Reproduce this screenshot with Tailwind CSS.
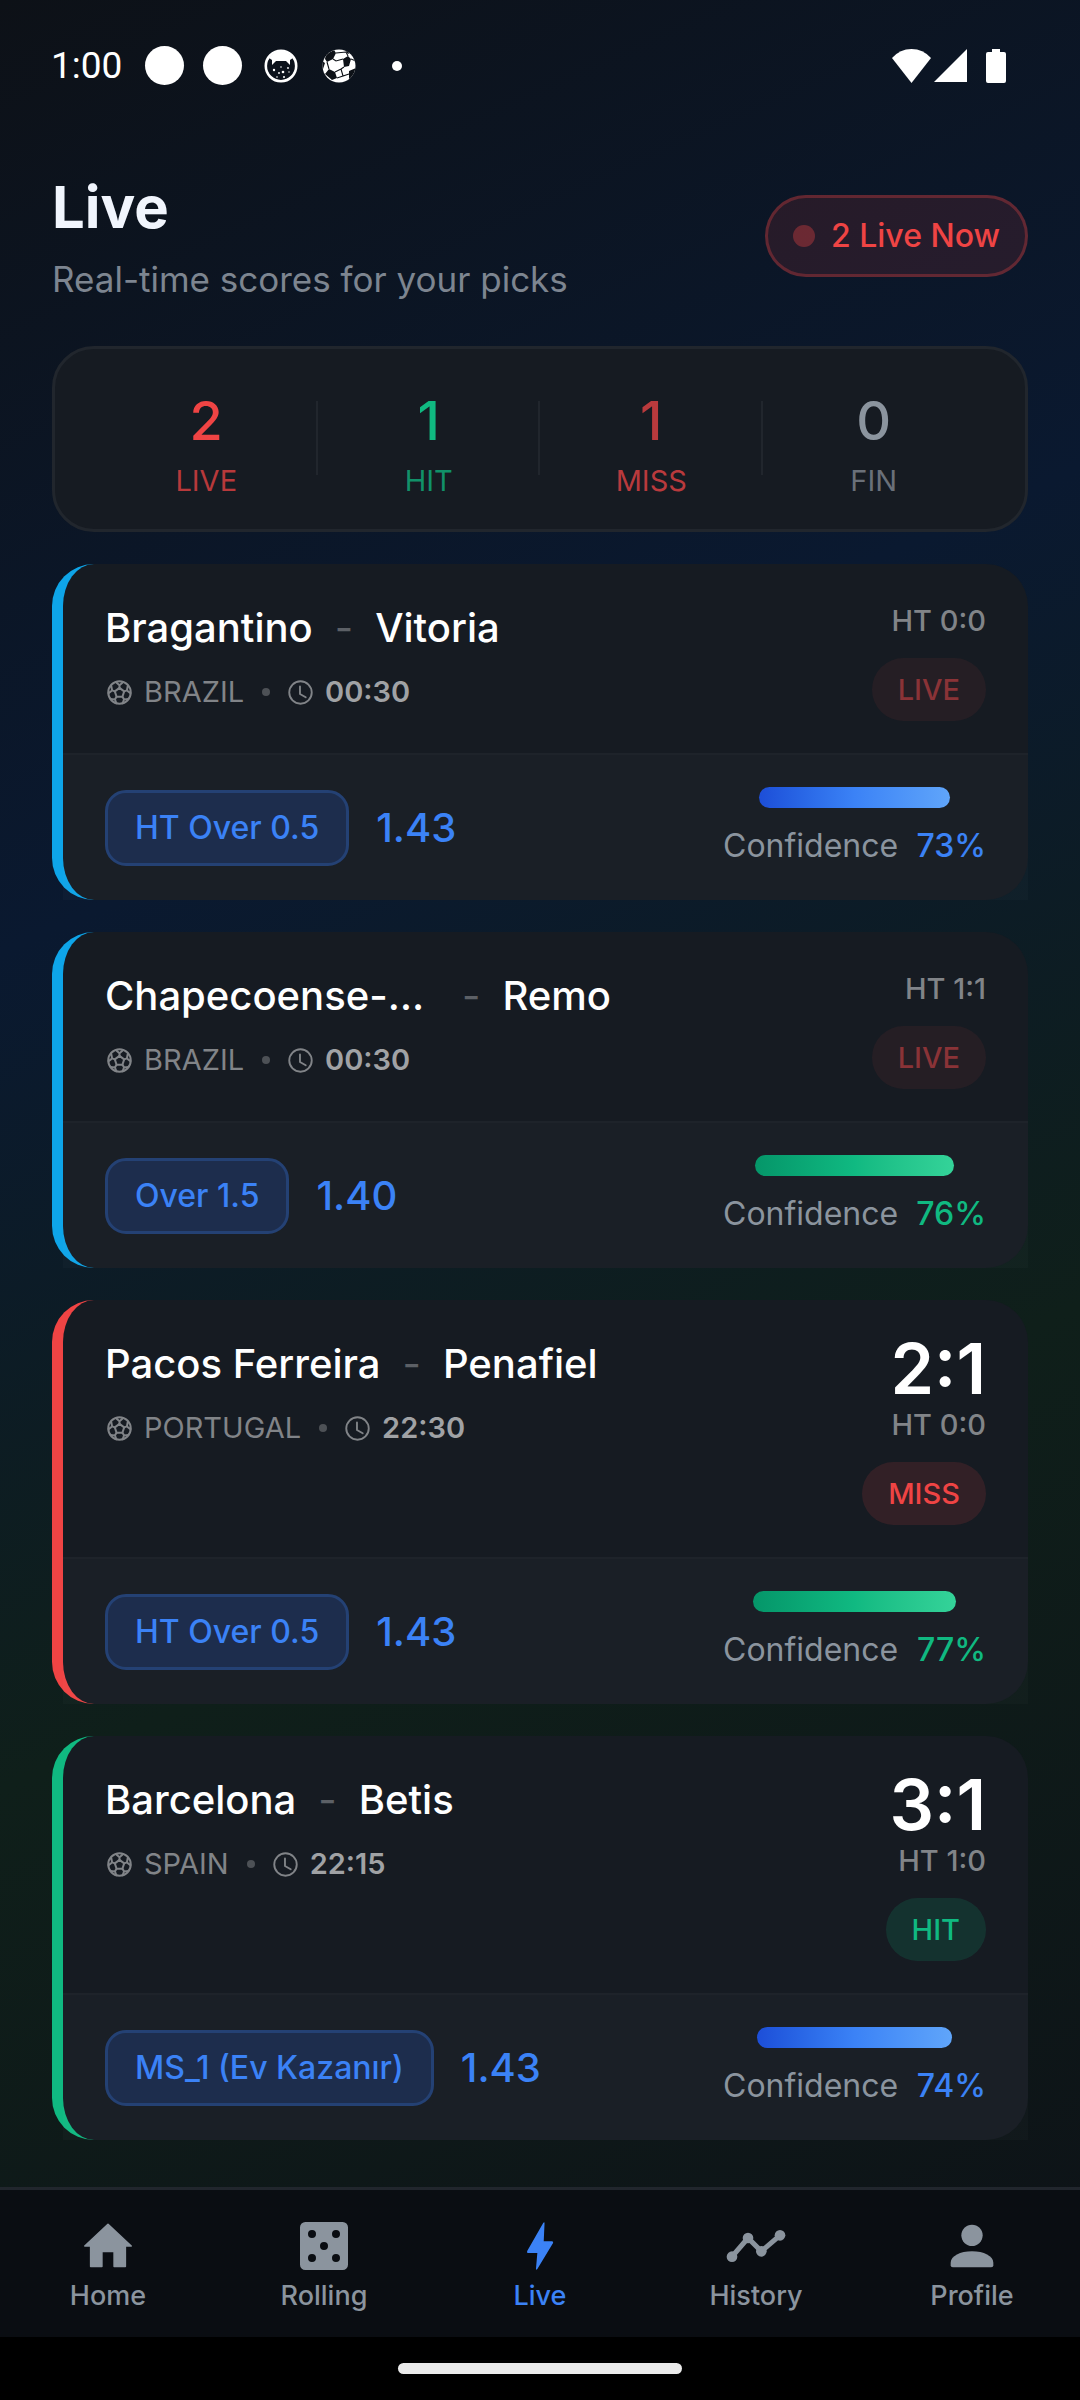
<!DOCTYPE html>
<html lang="en">
<head>
<meta charset="utf-8">
<meta name="viewport" content="width=device-width, initial-scale=1">
<title>Live</title>
<script src="https://cdn.jsdelivr.net/npm/@tailwindcss/browser@4"></script>
</head>
<body class="bg-black font-['Inter',sans-serif] text-white antialiased">
<svg class="hidden" aria-hidden="true">
  <symbol id="ball" viewBox="0 0 24 24">
    <g fill="none" stroke="currentColor" stroke-width="1.9" stroke-linejoin="round" stroke-linecap="round">
      <circle cx="12" cy="12" r="10.8"/>
      <path d="M12 7.6L7.5 10.9L9.2 16.1H14.8L16.5 10.9Z"/>
      <path d="M12 7.6V5L8.4 2M12 5L15.6 2M7.5 10.9L4.9 10L4 5.3M4.9 10L1.5 12.6M16.5 10.9L19.1 10L20 5.3M19.1 10L22.5 12.6M9.2 16.1L7.6 18.6L3.4 18.2M7.6 18.6L9 22.3M14.8 16.1L16.4 18.6L20.6 18.2M16.4 18.6L15 22.3"/>
    </g>
  </symbol>
  <symbol id="clock" viewBox="0 0 24 24">
    <g fill="none" stroke="currentColor" stroke-width="1.8" stroke-linejoin="round" stroke-linecap="round">
      <circle cx="12" cy="12" r="10.8"/>
      <path d="M11.5 6.2V13.4L17 16.6"/>
    </g>
  </symbol>
</svg>

<div class="flex min-h-screen flex-col bg-[linear-gradient(155.8deg,#0d1117_0%,#0a1930_33%,#0f1f1a_62%,#0d1117_100%)]">

  <!-- Status bar -->
  <div class="flex h-[131px] items-center justify-between pr-[74px] pl-[51px]">
    <div class="flex items-center">
      <span class="font-['Roboto',sans-serif] text-[37px] leading-10">1:00</span>
      <span class="ml-[23px] size-[39px] rounded-full bg-white"></span>
      <span class="ml-[19px] size-[39px] rounded-full bg-white"></span>
      <svg class="ml-[22px] size-[34px]" viewBox="0 0 34 34" aria-hidden="true">
        <circle cx="17" cy="17" r="15.2" fill="none" stroke="#fff" stroke-width="2.6"/>
        <path d="M5 9Q10 2 17 2T29 9L26 11V16L22 12H12L8 16V11Z" fill="#fff"/>
        <g fill="#fff"><circle cx="10" cy="21" r="1.2"/><circle cx="15" cy="24" r=".9"/><circle cx="19" cy="23" r="1.3"/><circle cx="24" cy="19" r=".9"/><circle cx="17" cy="18" r=".8"/><circle cx="20" cy="28" r="1"/><circle cx="13" cy="28" r=".8"/><circle cx="25" cy="23" r=".7"/></g>
      </svg>
      <svg class="ml-6 size-[34px]" viewBox="0 0 34 34" aria-hidden="true">
        <defs><clipPath id="disc"><circle cx="17" cy="17" r="16.5"/></clipPath></defs>
        <g clip-path="url(#disc)">
          <rect width="34" height="34" fill="#fff"/>
          <path d="M4 5L12 1L14 4L11 10L5 13L3 10ZM21 10L26 7L29 10L27 17L22 18ZM7 20L13 23L15 29L10 31L3 25ZM27 22L34 19V28L27 30ZM0 12L3 14L1 20L0 20ZM22 0L29 3L26 5Z" fill="#0d1117"/>
          <path d="M11 10L14 12L21 10M14 4L24 3L26 7M7 20L5 13M13 23L19 20L22 18M19 20L21 27L27 25M21 27L15 29M29 10L34 12" fill="none" stroke="#0d1117" stroke-width="1.1"/>
        </g>
      </svg>
      <span class="ml-9 size-[10px] rounded-full bg-white"></span>
    </div>
    <div class="flex items-center">
      <svg class="h-[34px] w-[39px]" viewBox="0 0 39 34" fill="#fff" aria-hidden="true"><path d="M0 9Q8 0 19.500 0T39 9L19.500 34Z"/></svg>
      <svg class="ml-[3px] size-[33px]" viewBox="0 0 33 33" fill="#fff" aria-hidden="true"><path d="M33 0V33H0Z"/></svg>
      <svg class="ml-[19px] h-[34px] w-5" viewBox="0 0 20 34" fill="#fff" aria-hidden="true"><path d="M6 0H14V3H18Q20 3 20 5V32Q20 34 18 34H2Q0 34 0 32V5Q0 3 2 3H6Z"/></svg>
    </div>
  </div>

  <main class="flex grow flex-col px-[52px] pb-[47px]">
    <!-- Page title -->
    <header class="flex items-center justify-between pt-[41px] pb-[46px]">
      <div>
        <h1 class="text-[58px] leading-[70px] font-bold text-[#f1f5fd]">Live</h1>
        <p class="mt-4 text-[35px] leading-[42px] text-[#7d8590]">Real-time scores for your picks</p>
      </div>
      <div class="flex h-[82px] items-center gap-4 rounded-full border-[3px] border-[#ef4444]/30 bg-[#ef4444]/12 px-[25px]">
        <span class="size-[22px] rounded-full bg-[#ef4444]/35"></span>
        <span class="text-[32px] leading-[42px] font-medium text-[#ef4444]">2 Live Now</span>
      </div>
    </header>

    <!-- Totals -->
    <dl class="grid grid-cols-4 rounded-[42px] border-[3px] border-[#21262d] bg-[#161b22] px-10 pt-[38px] pb-[30px] text-center">
      <div class="relative flex flex-col-reverse">
        <dt class="text-[29px] leading-9 text-[#ef4444]/75">LIVE</dt>
        <dd class="mb-2 text-[54px] leading-[68px] font-medium text-[#ef4444]">2</dd>
        <span class="absolute top-[14px] right-0 h-[74px] w-[2px] bg-[#21262d]"></span>
      </div>
      <div class="relative flex flex-col-reverse">
        <dt class="text-[29px] leading-9 text-[#10b981]/75">HIT</dt>
        <dd class="mb-2 text-[54px] leading-[68px] font-medium text-[#10b981]">1</dd>
        <span class="absolute top-[14px] right-0 h-[74px] w-[2px] bg-[#21262d]"></span>
      </div>
      <div class="relative flex flex-col-reverse">
        <dt class="text-[29px] leading-9 text-[#b93a3d]">MISS</dt>
        <dd class="mb-2 text-[54px] leading-[68px] font-medium text-[#b93a3d]">1</dd>
        <span class="absolute top-[14px] right-0 h-[74px] w-[2px] bg-[#21262d]"></span>
      </div>
      <div class="flex flex-col-reverse">
        <dt class="text-[29px] leading-9 text-[#6a7079]">FIN</dt>
        <dd class="mb-2 text-[54px] leading-[68px] font-medium text-[#8b949e]">0</dd>
      </div>
    </dl>

    <!-- Matches -->
    <div class="mt-8 flex flex-col gap-8">
      <article class="rounded-[42px] border-l-[11px] border-[#0ea5e9] bg-[#161b22]">
        <div class="flex min-h-[189px] justify-between px-[42px] py-8">
          <div class="pt-[6px]">
            <h2 class="flex text-[40px] leading-[52px] font-medium"><span>Bragantino</span><span class="mx-[22px] font-normal text-[#5c6066]">-</span><span>Vitoria</span></h2>
            <p class="mt-5 flex items-center text-[29px] leading-9 text-[#818488]"><svg class="ml-[2px] size-[25px]"><use href="#ball"/></svg><span class="ml-3">BRAZIL</span><span class="mx-[18px] size-2 rounded-full bg-[#4d5156]"></span><svg class="size-[25px]"><use href="#clock"/></svg><time class="ml-3 font-semibold text-[#a0a2a5]">00:30</time></p>
          </div>
          <div class="flex flex-col items-end justify-end">
            <p class="text-[29px] leading-[38px] font-medium text-[#818488]">HT 0:0</p>
            <span class="mt-[18px] flex h-[63px] items-center rounded-full bg-[#ef4444]/7 px-[26px] text-[29px] leading-9 font-medium text-[#8a3337]">LIVE</span>
          </div>
        </div>
        <div class="flex items-center justify-between border-t-2 border-white/2 bg-white/2 px-[42px] py-8">
          <div class="flex items-center gap-[27px]">
            <span class="flex h-[76px] items-center rounded-[21px] border-[3px] border-[#244174] bg-[#1d2d4d] px-[27px] text-[32px] leading-[42px] font-medium text-[#3b82f6]">HT Over 0.5</span>
            <span class="text-[40px] leading-[52px] font-medium text-[#3b82f6]">1.43</span>
          </div>
          <div class="flex w-[263px] flex-col items-center gap-4">
            <div class="h-[21px] rounded-full bg-linear-to-r from-[#1d4ed8] via-[#3b82f6] to-[#60a5fa]" style="width:73%"></div>
            <p class="flex w-full justify-between text-[32px] leading-11 text-[#8b949e]"><span>Confidence</span><span class="font-medium text-[#3b82f6]">73%</span></p>
          </div>
        </div>
      </article>

      <article class="rounded-[42px] border-l-[11px] border-[#0ea5e9] bg-[#161b22]">
        <div class="flex min-h-[189px] justify-between px-[42px] py-8">
          <div class="pt-[6px]">
            <h2 class="flex text-[40px] leading-[52px] font-medium"><span class="w-[335px]">Chapecoense-…</span><span class="mx-[22px] font-normal text-[#5c6066]">-</span><span>Remo</span></h2>
            <p class="mt-5 flex items-center text-[29px] leading-9 text-[#818488]"><svg class="ml-[2px] size-[25px]"><use href="#ball"/></svg><span class="ml-3">BRAZIL</span><span class="mx-[18px] size-2 rounded-full bg-[#4d5156]"></span><svg class="size-[25px]"><use href="#clock"/></svg><time class="ml-3 font-semibold text-[#a0a2a5]">00:30</time></p>
          </div>
          <div class="flex flex-col items-end justify-end">
            <p class="text-[29px] leading-[38px] font-medium text-[#818488]">HT 1:1</p>
            <span class="mt-[18px] flex h-[63px] items-center rounded-full bg-[#ef4444]/7 px-[26px] text-[29px] leading-9 font-medium text-[#8a3337]">LIVE</span>
          </div>
        </div>
        <div class="flex items-center justify-between border-t-2 border-white/2 bg-white/2 px-[42px] py-8">
          <div class="flex items-center gap-[27px]">
            <span class="flex h-[76px] items-center rounded-[21px] border-[3px] border-[#244174] bg-[#1d2d4d] px-[27px] text-[32px] leading-[42px] font-medium text-[#3b82f6]">Over 1.5</span>
            <span class="text-[40px] leading-[52px] font-medium text-[#3b82f6]">1.40</span>
          </div>
          <div class="flex w-[263px] flex-col items-center gap-4">
            <div class="h-[21px] rounded-full bg-linear-to-r from-[#059669] via-[#10b981] to-[#34d399]" style="width:76%"></div>
            <p class="flex w-full justify-between text-[32px] leading-11 text-[#8b949e]"><span>Confidence</span><span class="font-medium text-[#10b981]">76%</span></p>
          </div>
        </div>
      </article>

      <article class="rounded-[42px] border-l-[11px] border-[#ef4444] bg-[#161b22]">
        <div class="flex min-h-[189px] justify-between px-[42px] py-8">
          <div class="pt-[6px]">
            <h2 class="flex text-[40px] leading-[52px] font-medium"><span>Pacos Ferreira</span><span class="mx-[22px] font-normal text-[#5c6066]">-</span><span>Penafiel</span></h2>
            <p class="mt-5 flex items-center text-[29px] leading-9 text-[#818488]"><svg class="ml-[2px] size-[25px]"><use href="#ball"/></svg><span class="ml-3">PORTUGAL</span><span class="mx-[18px] size-2 rounded-full bg-[#4d5156]"></span><svg class="size-[25px]"><use href="#clock"/></svg><time class="ml-3 font-semibold text-[#a0a2a5]">22:30</time></p>
          </div>
          <div class="flex flex-col items-end justify-end">
            <p class="text-[70px] leading-[74px] font-semibold">2:1</p>
            <p class="text-[29px] leading-[38px] font-medium text-[#818488]">HT 0:0</p>
            <span class="mt-[18px] flex h-[63px] items-center rounded-full bg-[#ef4444]/13 px-[26px] text-[29px] leading-9 font-medium text-[#ef4444]">MISS</span>
          </div>
        </div>
        <div class="flex items-center justify-between border-t-2 border-white/2 bg-white/2 px-[42px] py-8">
          <div class="flex items-center gap-[27px]">
            <span class="flex h-[76px] items-center rounded-[21px] border-[3px] border-[#244174] bg-[#1d2d4d] px-[27px] text-[32px] leading-[42px] font-medium text-[#3b82f6]">HT Over 0.5</span>
            <span class="text-[40px] leading-[52px] font-medium text-[#3b82f6]">1.43</span>
          </div>
          <div class="flex w-[263px] flex-col items-center gap-4">
            <div class="h-[21px] rounded-full bg-linear-to-r from-[#059669] via-[#10b981] to-[#34d399]" style="width:77%"></div>
            <p class="flex w-full justify-between text-[32px] leading-11 text-[#8b949e]"><span>Confidence</span><span class="font-medium text-[#10b981]">77%</span></p>
          </div>
        </div>
      </article>

      <article class="rounded-[42px] border-l-[11px] border-[#10b981] bg-[#161b22]">
        <div class="flex min-h-[189px] justify-between px-[42px] py-8">
          <div class="pt-[6px]">
            <h2 class="flex text-[40px] leading-[52px] font-medium"><span>Barcelona</span><span class="mx-[22px] font-normal text-[#5c6066]">-</span><span>Betis</span></h2>
            <p class="mt-5 flex items-center text-[29px] leading-9 text-[#818488]"><svg class="ml-[2px] size-[25px]"><use href="#ball"/></svg><span class="ml-3">SPAIN</span><span class="mx-[18px] size-2 rounded-full bg-[#4d5156]"></span><svg class="size-[25px]"><use href="#clock"/></svg><time class="ml-3 font-semibold text-[#a0a2a5]">22:15</time></p>
          </div>
          <div class="flex flex-col items-end justify-end">
            <p class="text-[70px] leading-[74px] font-semibold">3:1</p>
            <p class="text-[29px] leading-[38px] font-medium text-[#818488]">HT 1:0</p>
            <span class="mt-[18px] flex h-[63px] items-center rounded-full bg-[#10b981]/15 px-[26px] text-[29px] leading-9 font-medium text-[#10b981]">HIT</span>
          </div>
        </div>
        <div class="flex items-center justify-between border-t-2 border-white/2 bg-white/2 px-[42px] py-8">
          <div class="flex items-center gap-[27px]">
            <span class="flex h-[76px] items-center rounded-[21px] border-[3px] border-[#244174] bg-[#1d2d4d] px-[27px] text-[32px] leading-[42px] font-medium text-[#3b82f6]">MS_1 (Ev Kazanır)</span>
            <span class="text-[40px] leading-[52px] font-medium text-[#3b82f6]">1.43</span>
          </div>
          <div class="flex w-[263px] flex-col items-center gap-4">
            <div class="h-[21px] rounded-full bg-linear-to-r from-[#1d4ed8] via-[#3b82f6] to-[#60a5fa]" style="width:74%"></div>
            <p class="flex w-full justify-between text-[32px] leading-11 text-[#8b949e]"><span>Confidence</span><span class="font-medium text-[#3b82f6]">74%</span></p>
          </div>
        </div>
      </article>
    </div>
  </main>

  <!-- Tab bar -->
  <nav class="grid h-[150px] grid-cols-5 border-t-[3px] border-[#21262d] bg-[#0a0d12] pt-6 text-[27px] leading-9 font-medium text-[#8b949e]">
    <a href="#home" class="flex flex-col items-center"><svg class="size-16" viewBox="0 0 24 24" fill="currentColor" stroke="currentColor" stroke-width=".6" stroke-linejoin="round"><path d="M9.700 19.700H5.500V12H3.300L12 3.900L20.700 12H18.500V19.700H14.300V14H9.700Z"/></svg><span>Home</span></a>
    <a href="#rolling" class="flex flex-col items-center"><svg class="size-16" viewBox="0 0 24 24" fill="currentColor"><path fill-rule="evenodd" d="M5 3H19A2 2 0 0 1 21 5V19A2 2 0 0 1 19 21H5A2 2 0 0 1 3 19V5A2 2 0 0 1 5 3M7.500 6A1.500 1.500 0 0 0 7.500 9A1.500 1.500 0 0 0 7.500 6M16.500 6A1.500 1.500 0 0 0 16.500 9A1.500 1.500 0 0 0 16.500 6M12 10.500A1.500 1.500 0 0 0 12 13.500A1.500 1.500 0 0 0 12 10.500M7.500 15A1.500 1.500 0 0 0 7.500 18A1.500 1.500 0 0 0 7.500 15M16.500 15A1.500 1.500 0 0 0 16.500 18A1.500 1.500 0 0 0 16.500 15Z"/></svg><span>Rolling</span></a>
    <a href="#live" aria-current="page" class="flex flex-col items-center text-[#3b82f6]"><svg class="size-16" viewBox="0 0 24 24" fill="currentColor"><path d="M11 14.600H7.500Q6.900 14.600 7.200 13.900L13.200 3.400Q13.700 2.700 13.700 3.600L13.400 10.200H16.500Q17.100 10.200 16.900 10.900L11 20.600Q10.500 21.300 10.500 20.400Z"/></svg><span>Live</span></a>
    <a href="#history" class="flex flex-col items-center"><svg class="size-16" viewBox="0 0 24 24" fill="currentColor"><path d="M3 16L9 9L14 14L21 8" fill="none" stroke="currentColor" stroke-width="1.900"/><circle cx="3" cy="16" r="2"/><circle cx="9" cy="9" r="2"/><circle cx="14" cy="14" r="2"/><circle cx="21" cy="8" r="2"/></svg><span>History</span></a>
    <a href="#profile" class="flex flex-col items-center"><svg class="size-16" viewBox="0 0 24 24" fill="currentColor"><circle cx="12" cy="8" r="4"/><path d="M12 14C16.400 14 20 15.800 20 18.300V19.200Q20 20 19.200 20H4.800Q4 20 4 19.200V18.300C4 15.800 7.600 14 12 14Z"/></svg><span>Profile</span></a>
  </nav>

  <!-- Gesture handle -->
  <div class="flex h-[63px] items-center justify-center bg-black">
    <span class="h-[11px] w-[284px] rounded-full bg-[#ebebeb]"></span>
  </div>
</div>
</body>
</html>
